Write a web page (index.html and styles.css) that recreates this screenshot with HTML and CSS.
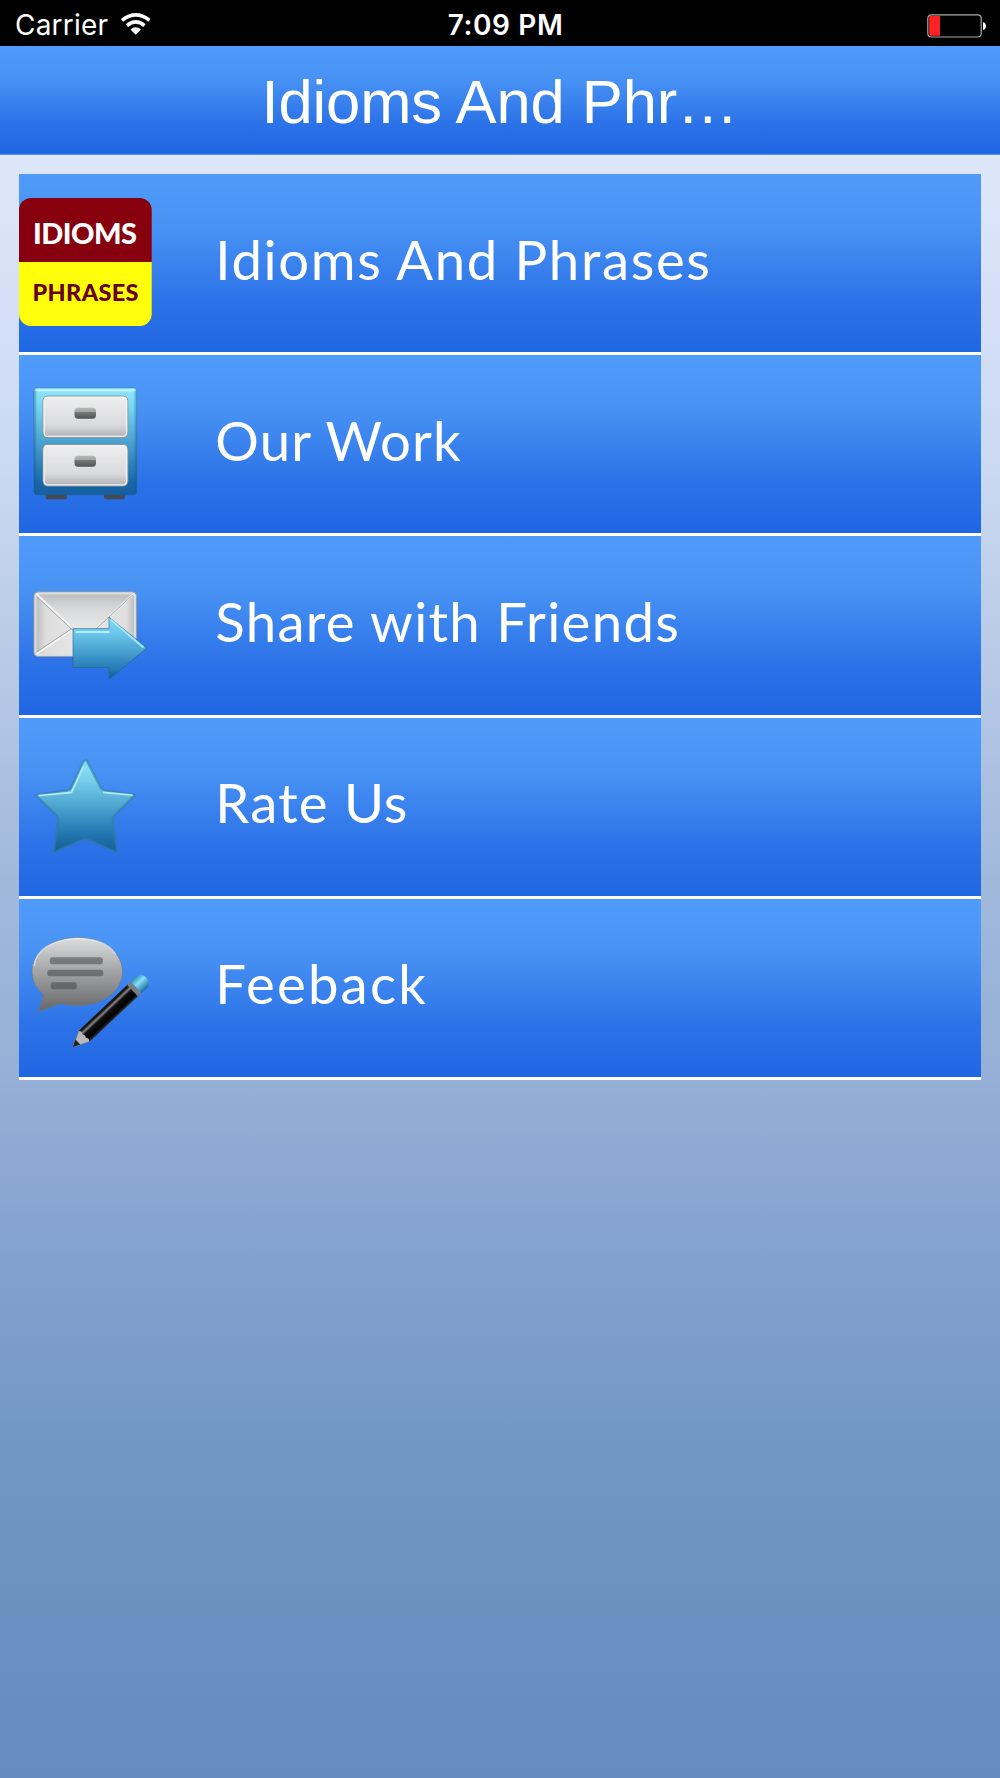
FILE: index.html
```html
<!DOCTYPE html>
<html lang="en">
<head>
<meta charset="utf-8">
<title>Idioms And Phrases</title>
<link rel="stylesheet" href="styles.css">
</head>
<body>
<div class="status">
  <div class="carrier"><span>Carrier</span>
    <svg class="wifi" width="32" height="24" viewBox="120 12 32 24" fill="none" stroke="#fff" stroke-width="3.6"><path d="M122 20.3Q135.7 9.5 149.5 20.3M127 25.6Q135.7 18.2 144.500 25.600"/><path d="M130.500 29.500Q135.700 25 141 29.500L135.700 34.800Z" fill="#fff" stroke="none"/></svg>
  </div>
  <div class="time">7:09 PM</div>
  <svg class="battery" width="60" height="26" viewBox="926 12 60 26"><rect x="927.800" y="13.800" width="53.400" height="22.200" rx="3.500" fill="none" stroke="#aaa" stroke-width="1.200"/><path d="M929.200 15H940v19.800h-8.800q-2 0-2-2z" fill="#fe2123"/><path d="M983 21q3 1 3 4t-3 4z" fill="#fff"/></svg>
</div>
<header class="navbar"><h1>Idioms And Phr…</h1></header>
<main class="menu">
  <div class="row">
    <svg class="icon" viewBox="19.500 174 150 178.200">
      <clipPath id="tile"><rect x="19.500" y="198" width="132.700" height="128" rx="12"/></clipPath>
      <g clip-path="url(#tile)"><path fill="#87000d" d="M19 198h134v64H19z"/><path fill="#ffff0b" d="M19 262h134v65H19z"/></g>
      <text class="logo" x="33.500" y="243.700" font-size="29" textLength="104" fill="#fff">IDIOMS</text>
      <text class="logo" x="33" y="300.700" font-size="23.500" textLength="106" fill="#680008">PHRASES</text>
    </svg>
    <span class="label l1">Idioms And Phrases</span>
  </div>
  <div class="row">
    <svg class="icon" viewBox="19.500 355.200 150 178.200">
      <defs>
        <linearGradient id="cab" x2="0" y2="1"><stop stop-color="#8ee6fb"/><stop offset=".15" stop-color="#7bd9f4"/><stop offset=".88" stop-color="#1768aa"/><stop offset="1" stop-color="#155f9f"/></linearGradient>
        <linearGradient id="drawer" x2="0" y2="1"><stop stop-color="#efeff0"/><stop offset=".7" stop-color="#d9dadc"/><stop offset="1" stop-color="#adafb2"/></linearGradient>
        <linearGradient id="knob" x2="0" y2="1"><stop stop-color="#b5b6b6"/><stop offset=".35" stop-color="#a5a6a6"/><stop offset=".42" stop-color="#767777"/><stop offset="1" stop-color="#505252"/></linearGradient>
      </defs>
      <path fill="#444b52" d="M46 494h21.500v3.500q0 2-2 2H48q-2 0-2-2zM104.500 494h21v3.500q0 2-2 2h-17q-2 0-2-2z"/>
      <rect x="34.500" y="388" width="102.700" height="107" rx="3" fill="url(#cab)" stroke="#235f88" stroke-opacity=".45"/>
      <path d="M37 390.500h98" stroke="#c5f3fc" stroke-width="2"/>
      <path d="M35.800 391v102M136 391v102" stroke="#155a85" stroke-opacity=".3" stroke-width="2"/>
      <g fill="url(#drawer)" stroke="#8a949a"><rect x="43.500" y="396.300" width="84.800" height="41.500" rx="4.500"/><rect x="43.500" y="444.700" width="84.800" height="41.500" rx="4.500"/></g>
      <g fill="none" stroke="#f3f3f3" stroke-width="1.300"><rect x="44.700" y="397.500" width="82.400" height="39.100" rx="3.500"/><rect x="44.700" y="445.900" width="82.400" height="39.100" rx="3.500"/></g>
      <g fill="url(#knob)"><rect x="75" y="408" width="21.500" height="11" rx="3.500"/><rect x="75" y="456" width="21.500" height="11" rx="3.500"/></g>
    </svg>
    <span class="label l2">Our Work</span>
  </div>
  <div class="row">
    <svg class="icon" viewBox="19.500 536.400 150 178.200">
      <defs>
        <linearGradient id="flap" x2="0" y2="1"><stop stop-color="#bcbdbe"/><stop offset=".4" stop-color="#d6d7d8"/><stop offset="1" stop-color="#e8e8e9"/></linearGradient>
        <linearGradient id="side"><stop stop-color="#b6b7b9"/><stop offset=".12" stop-color="#dededf"/><stop offset=".5" stop-color="#e8e8e9"/><stop offset=".9" stop-color="#dededf"/><stop offset="1" stop-color="#b6b7b9"/></linearGradient>
        <linearGradient id="arrow" x2="0" y2="1"><stop stop-color="#82dcf5"/><stop offset=".25" stop-color="#6cc8eb"/><stop offset=".85" stop-color="#2478b4"/><stop offset="1" stop-color="#16588e"/></linearGradient>
      </defs>
      <rect x="34.500" y="592.300" width="102.500" height="64.500" rx="4" fill="url(#side)" stroke="#9a9da1"/>
      <path d="M38 594h96L97 629.500H74z" fill="url(#flap)"/>
      <rect x="36" y="593.800" width="99.500" height="61.500" rx="3" fill="none" stroke="#dcddde" stroke-width="2"/>
      <path d="M37 594.500l37 35h23l37-35M37 654.500l37-25" fill="none" stroke="#f3f3f3" stroke-width="2"/>
      <path d="M37 596.800l36.500 34M37 652.500l36-24M97 629l36.500-34" fill="none" stroke="#a3a5a7" stroke-width="1"/>
      <path d="M73.500 629h36V617.500L147.500 648.500 109.500 679.500V667.800h-36z" fill="url(#arrow)" stroke="#236485" stroke-opacity=".6"/>
      <path d="M76 632.300h34" stroke="#b4eafa" stroke-width="2"/><path d="M111 620l33 28" stroke="#a2e4f8" stroke-width="2"/>
    </svg>
    <span class="label l3">Share with Friends</span>
  </div>
  <div class="row">
    <svg class="icon" viewBox="19.500 717.600 150 178.200">
      <defs><linearGradient id="star" x2="0" y2="1"><stop stop-color="#8ae4f8"/><stop offset=".2" stop-color="#78d1ec"/><stop offset=".8" stop-color="#2277b2"/><stop offset="1" stop-color="#155c91"/></linearGradient></defs>
      <path d="M85.800 760.200Q87 760.200 88 762L101 787Q102.500 789.500 105 790L135.500 794.500 115 815Q113 817 113.300 820L117.300 851.700 89 839Q85.800 837.500 82.500 839L54.500 851.700 58.700 820Q59 817 57 815L36.500 794.800 68 790Q70.500 789.500 72 787L83.700 762Q84.500 760.200 85.800 760.200Z" fill="url(#star)" stroke="#307b99" stroke-opacity=".5" stroke-width="2.500" stroke-linejoin="round"/>
      <path d="M39 795.300 72 792 84 766M103.500 792l29.500 2.700" fill="none" stroke="#b5e7f4" stroke-width="1.700"/>
    </svg>
    <span class="label l4">Rate Us</span>
  </div>
  <div class="row">
    <svg class="icon" viewBox="19.500 898.800 150 178.200">
      <defs>
        <linearGradient id="bubble" x2="0" y2="1"><stop stop-color="#dcddde"/><stop offset=".45" stop-color="#a4a5a6"/><stop offset="1" stop-color="#646667"/></linearGradient>
        <linearGradient id="body" x2="0" y2="1"><stop stop-color="#222"/><stop offset=".12" stop-color="#111"/><stop offset=".27" stop-color="#868686"/><stop offset=".42" stop-color="#111"/><stop offset=".8" stop-color="#000"/><stop offset="1" stop-color="#333"/></linearGradient>
        <linearGradient id="eraser" x2="0" y2="1"><stop stop-color="#2c8eba"/><stop offset=".4" stop-color="#82e0f6"/><stop offset="1" stop-color="#1d6e9c"/></linearGradient>
      </defs>
      <path d="M78 937.300c25 0 45 14.700 45 34.200S103 1005.500 78 1005.500q-9 0-16.500-2.200L38.700 1011.500 44 994.500Q32.500 985 32.500 971.500C32.500 952.500 53 937.300 78 937.300Z" fill="url(#bubble)" stroke="#707980" stroke-opacity=".6"/>
      <path d="M34.500 966Q38 941 77 938.500 106 938 116 954" fill="none" stroke="#eee" stroke-opacity=".65" stroke-width="1.500"/>
      <g fill="#454749" fill-opacity=".55"><rect x="50.300" y="957" width="53" height="7" rx="2.500"/><rect x="47.800" y="969.500" width="56" height="6.500" rx="2.500"/><rect x="51.300" y="982" width="26" height="7" rx="2.500"/></g>
      <g transform="translate(73.300 1046.700) rotate(-43.300)">
        <path d="M0 0 16-7.800H19V7.800H16Z" fill="#b9b9b9" stroke="#777" stroke-width=".6"/><path d="M0 0 7-3.400V3.400Z" fill="#222"/>
        <path d="M15-7.800H83V7.800H15Q19 4.500 15.500 2.500 18 0 15.500-2.500 18-5 15-7.800Z" fill="url(#body)"/>
        <path d="M82-7.800h5V7.800h-5z" fill="#777d80"/><path d="M87-8h7q7 1 7 8t-7 8h-7z" fill="url(#eraser)"/>
      </g>
    </svg>
    <span class="label l5">Feeback</span>
  </div>
</main>
</body>
</html>
```
FILE: styles.css
```css
* { box-sizing: border-box; }
body {
  margin: 0;
  min-height: 1778px;
  color: #fff;
  background: linear-gradient(180deg, #dce8f9 154px, #d5e0f6 300px, #cbdaf1 460px, #b6c8e6 680px, #a0b9db 880px, #95afd6 1080px, #83a1cf 1260px, #7297c5 1450px, #6990c0 1650px, #668cbe 1778px);
}
.status {
  display: grid;
  grid-template-columns: 1fr auto 1fr;
  align-items: center;
  height: 46px;
  padding: 5px 14px 0 15px;
  background: #000;
  font: 28px/41px Inter, sans-serif;
}
.carrier { display: flex; align-items: center; gap: 12px; letter-spacing: .2px; }
.wifi { margin-bottom: 3px; }
.time { font-weight: 600; letter-spacing: .6px; padding-left: 10px; }
.battery { justify-self: end; margin-bottom: 0; }
.navbar {
  height: 109px;
  background: linear-gradient(180deg, #509afa, #4892f4 30%, #2d73e8 70%, #1f66e4);
  border-bottom: 1px solid #5b92ec;
  text-align: center;
}
.navbar h1 {
  margin: 0;
  font: 400 61.500px/112px "Liberation Sans", sans-serif;
  letter-spacing: -.1px;
}
.menu { padding: 19px 19.300px 0; }
.row {
  display: flex;
  align-items: center;
  height: 181.200px;
  border-bottom: 3px solid #fff;
  background: linear-gradient(180deg, #509bfa, #4892f4 30%, #2d73e8 70%, #1f66e3) padding-box;
}
.icon { flex: none; width: 150px; height: 178.200px; }
.logo { font-family: Lato, sans-serif; font-weight: 900; }
.label {
  padding: 0 0 9px 46px;
  font: 54.500px/66px Lato, sans-serif;
  white-space: nowrap;
}
.l1 { letter-spacing: 1.650px; }
.l2 { letter-spacing: 1.150px; }
.l3 { letter-spacing: 1.300px; }
.l4 { letter-spacing: 1.200px; }
.l5 { letter-spacing: 2.200px; }
```
